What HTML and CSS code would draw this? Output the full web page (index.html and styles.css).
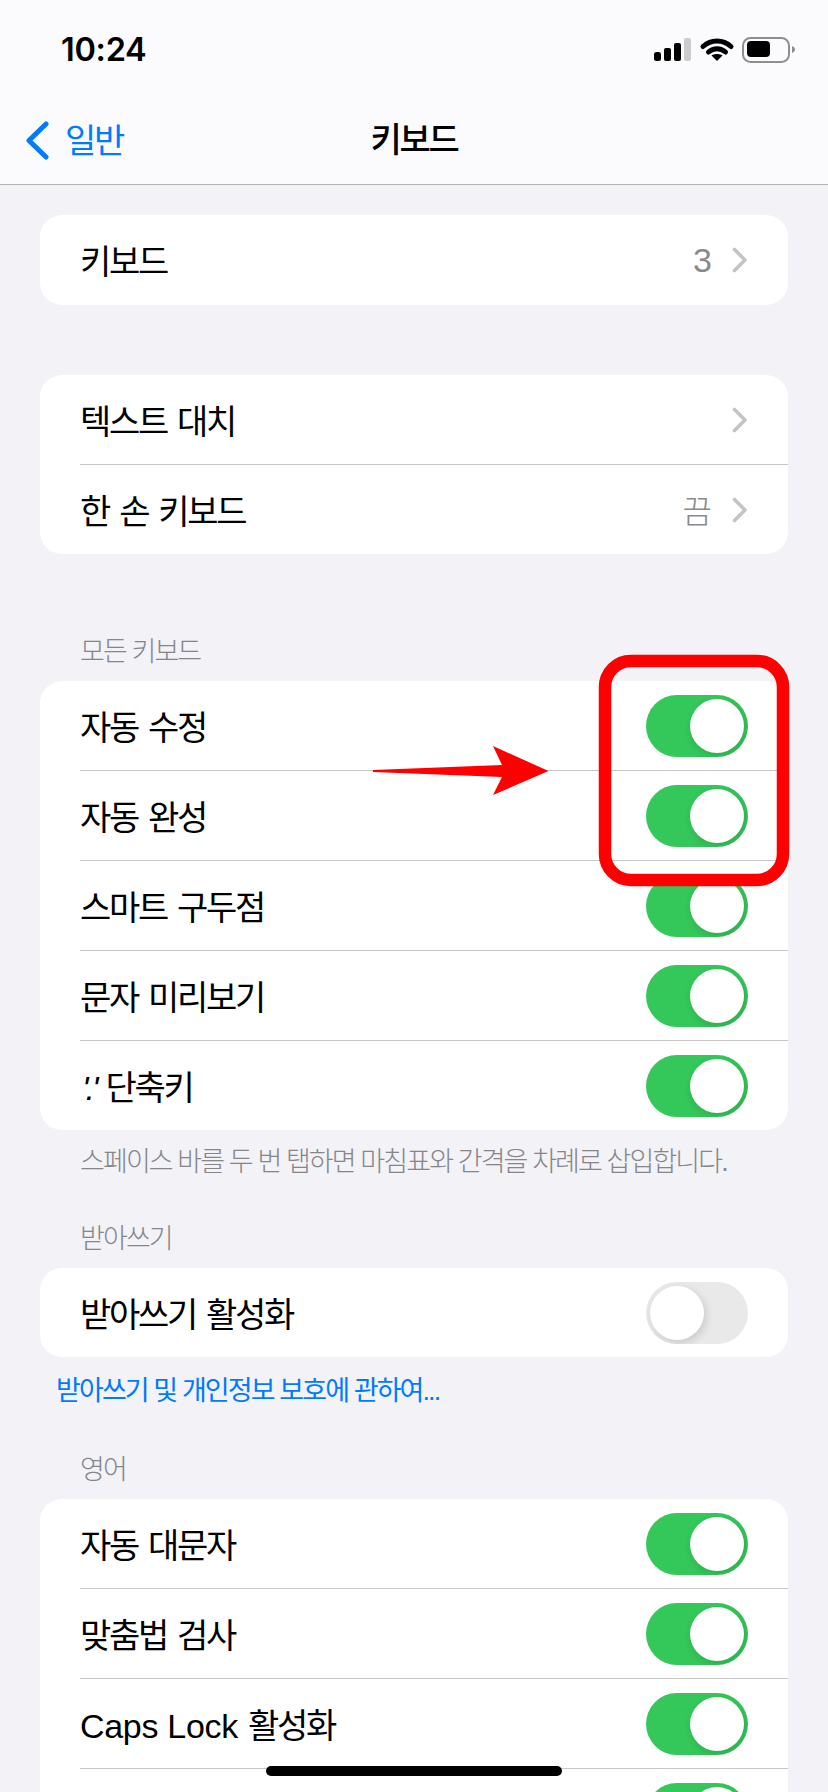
FILE: index.html
```html
<!DOCTYPE html>
<html lang="ko">
<head>
<meta charset="utf-8">
<title>키보드</title>
<link rel="stylesheet" href="styles.css">
</head>
<body>
<div class="screen">
  <header class="header">
    <div class="status">
      <span class="time">10:24</span>
      <svg class="status-icons" width="141" height="26" viewBox="0 0 141 26" aria-hidden="true">
        <rect x="0" y="15" width="7" height="9" rx="2.5" fill="#000"/>
        <rect x="10" y="11" width="7" height="13" rx="2" fill="#000"/>
        <rect x="20" y="6" width="7" height="18" rx="2" fill="#000"/>
        <rect x="30" y="1" width="7" height="23" rx="2" fill="#ccc"/>
        <path d="M49 9.5C57 2 69 2 77 9.5" fill="none" stroke="#000" stroke-width="5" stroke-linecap="round"/>
        <path d="M54.5 15C59.5 10.5 66.500 10.5 71.500 15" fill="none" stroke="#000" stroke-width="5" stroke-linecap="round"/>
        <path d="M63 24L57.500 18.500C60.500 16.500 65.500 16.500 68.500 18.500Z" fill="#000"/>
        <rect x="89" y="1" width="46" height="24" rx="7.500" fill="none" stroke="#8e8e8e" stroke-width="2"/>
        <rect x="93" y="4" width="23" height="16" rx="4" fill="#000"/>
        <path d="M138 9C140 10 141 11 141 12.500C141 14 140 15 138 16Z" fill="#8e8e8e"/>
      </svg>
    </div>
    <nav class="nav">
      <a class="back">
        <svg class="back-chevron" width="25" height="39" viewBox="0 0 25 39" aria-hidden="true">
          <path d="M21 3L4 19.500L21 36" fill="none" stroke="#007aff" stroke-width="5" stroke-linecap="round" stroke-linejoin="round"/>
        </svg>
        <span>일반</span>
      </a>
      <h1 class="title">키보드</h1>
    </nav>
  </header>

  <main class="content">
    <section class="card first">
      <div class="row"><span class="name">키보드</span><span class="value num">3</span><svg class="chev" width="16" height="26" viewBox="0 0 16 26"><path d="M2.500 2.500L13 13L2.500 23.500" fill="none" stroke="#c4c4c7" stroke-width="3.600" stroke-linecap="round" stroke-linejoin="round"/></svg></div>
    </section>

    <section class="card second">
      <div class="row"><span class="name">텍스트 대치</span><svg class="chev" width="16" height="26" viewBox="0 0 16 26"><path d="M2.500 2.500L13 13L2.500 23.500" fill="none" stroke="#c4c4c7" stroke-width="3.600" stroke-linecap="round" stroke-linejoin="round"/></svg></div>
      <div class="row"><span class="name">한 손 키보드</span><span class="value">끔</span><svg class="chev" width="16" height="26" viewBox="0 0 16 26"><path d="M2.500 2.500L13 13L2.500 23.500" fill="none" stroke="#c4c4c7" stroke-width="3.600" stroke-linecap="round" stroke-linejoin="round"/></svg></div>
    </section>

    <h2 class="label label-all">모든 키보드</h2>
    <section class="card">
      <div class="row"><span class="name">자동 수정</span><span class="switch on"><i></i></span></div>
      <div class="row"><span class="name">자동 완성</span><span class="switch on"><i></i></span></div>
      <div class="row"><span class="name">스마트 구두점</span><span class="switch on"><i></i></span></div>
      <div class="row"><span class="name">문자 미리보기</span><span class="switch on"><i></i></span></div>
      <div class="row"><span class="name"><span class="latin quote">'.'</span> 단축키</span><span class="switch on"><i></i></span></div>
    </section>
    <p class="note">스페이스 바를 두 번 탭하면 마침표와 간격을 차례로 삽입합니다.</p>

    <h2 class="label label-dict">받아쓰기</h2>
    <section class="card">
      <div class="row"><span class="name">받아쓰기 활성화</span><span class="switch"><i></i></span></div>
    </section>
    <a class="link">받아쓰기 및 개인정보 보호에 관하여...</a>

    <h2 class="label label-en">영어</h2>
    <section class="card">
      <div class="row"><span class="name">자동 대문자</span><span class="switch on"><i></i></span></div>
      <div class="row"><span class="name">맞춤법 검사</span><span class="switch on"><i></i></span></div>
      <div class="row"><span class="name"><span class="latin">Caps Lock</span> 활성화</span><span class="switch on"><i></i></span></div>
      <div class="row"><span class="switch on"><i></i></span></div>
    </section>
  </main>

  <svg class="annotation" width="828" height="1792" viewBox="0 0 828 1792" aria-hidden="true">
    <rect x="605" y="661" width="178" height="219" rx="26" fill="none" stroke="#fe0000" stroke-width="12.500"/>
    <path d="M373 770L502 765L493 746L548.500 771L493 795L502 777L373 772Z" fill="#fe0000"/>
  </svg>
  <div class="home-bar"></div>
</div>
</body>
</html>
```

FILE: styles.css
```css
* { box-sizing: border-box; }

html, body {
  margin: 0;
  padding: 0;
  height: 1792px;
  overflow: hidden;
}

body {
  background: #f2f2f7;
  color: #000;
  font-family: "Liberation Sans", "Noto Sans CJK KR", sans-serif;
}

.screen {
  position: relative;
  width: 828px;
  height: 1792px;
  overflow: hidden;
}

.header {
  height: 185px;
  background: #fbfbfd;
  border-bottom: 1px solid #b3b3b6;
}

.status {
  height: 100px;
  padding: 36px 33px 0 61px;
  display: flex;
  justify-content: space-between;
  align-items: flex-start;
}

.time {
  font-family: "Inter", sans-serif;
  font-size: 32.5px;
  font-weight: 600;
  line-height: 28px;
  letter-spacing: -0.3px;
}

.status-icons { display: block; margin-top: 1px; }

.nav {
  position: relative;
  height: 80px;
  display: flex;
  align-items: center;
  justify-content: center;
  padding-bottom: 5px;
}

.back {
  position: absolute;
  left: 25px;
  top: 0;
  height: 76px;
  display: flex;
  align-items: center;
  gap: 15px;
  color: #007aff;
  font-size: 34px;
  letter-spacing: -2.3px;
}

.back-chevron { display: block; margin-top: 4px; }

.title {
  margin: 0;
  font-size: 34px;
  font-weight: 500;
  letter-spacing: -2.3px;
}

.content { padding: 0 40px; }

.card {
  background: #fff;
  border-radius: 22px;
  overflow: hidden;
}

.first { margin-top: 30px; }
.first .row { height: 90px; }
.second { margin-top: 70px; }

.row {
  position: relative;
  height: 89px;
  padding: 0 33px 0 40px;
  display: flex;
  align-items: center;
  justify-content: flex-end;
}

.row + .row {
  height: 90px;
  border-top: 1px solid #c6c6c8;
  margin-left: 40px;
  padding-left: 0;
}

.name {
  flex: 1;
  padding-bottom: 1px;
  font-size: 34px;
  letter-spacing: -2.3px;
  word-spacing: 3px;
  white-space: nowrap;
}

.latin {
  letter-spacing: -0.3px;
  word-spacing: 0;
}

.quote {
  font-style: italic;
  letter-spacing: -3px;
  margin-left: 2px;
}

.value {
  font-size: 32px;
  font-weight: 300;
  padding-bottom: 2px;
  color: #8a8a8e;
  margin-right: 20px;
}

.num {
  font-size: 34px;
  padding-bottom: 0;
  letter-spacing: 0;
}

.chev {
  display: block;
  margin-right: 7px;
}

.label {
  margin: 0 0 13px;
  padding-left: 40px;
  height: 36px;
  font-size: 27px;
  line-height: 40px;
  font-weight: 300;
  color: #85858a;
  letter-spacing: -1.9px;
}

.label-all { margin-top: 78px; }
.label-dict { margin-top: 40px; }
.label-en { margin-top: 42px; }

.note {
  margin: 13px 0 0;
  padding-left: 40px;
  height: 36px;
  font-size: 27px;
  font-weight: 300;
  line-height: 38px;
  color: #85858a;
  letter-spacing: -1.9px;
  white-space: nowrap;
}

.link {
  display: block;
  margin-top: 15px;
  padding-left: 16px;
  height: 36px;
  font-size: 27px;
  line-height: 38px;
  color: #007aff;
  letter-spacing: -1.9px;
  white-space: nowrap;
}

.switch {
  position: relative;
  display: block;
  flex: none;
  width: 102px;
  height: 62px;
  margin-right: 7px;
  border-radius: 31px;
  background: #e9e9ea;
  overflow: hidden;
}

.switch.on { background: #34c759; }

.switch i {
  position: absolute;
  top: 4px;
  left: 4px;
  width: 54px;
  height: 54px;
  border-radius: 50%;
  background: #fff;
  box-shadow: 2px 3px 8px rgba(0, 0, 0, 0.14);
}

.switch.on i { left: 44px; }

.annotation {
  position: absolute;
  top: 0;
  left: 0;
  pointer-events: none;
}

.home-bar {
  position: absolute;
  left: 266px;
  top: 1766px;
  width: 296px;
  height: 10px;
  border-radius: 5px;
  background: #000;
}
```
